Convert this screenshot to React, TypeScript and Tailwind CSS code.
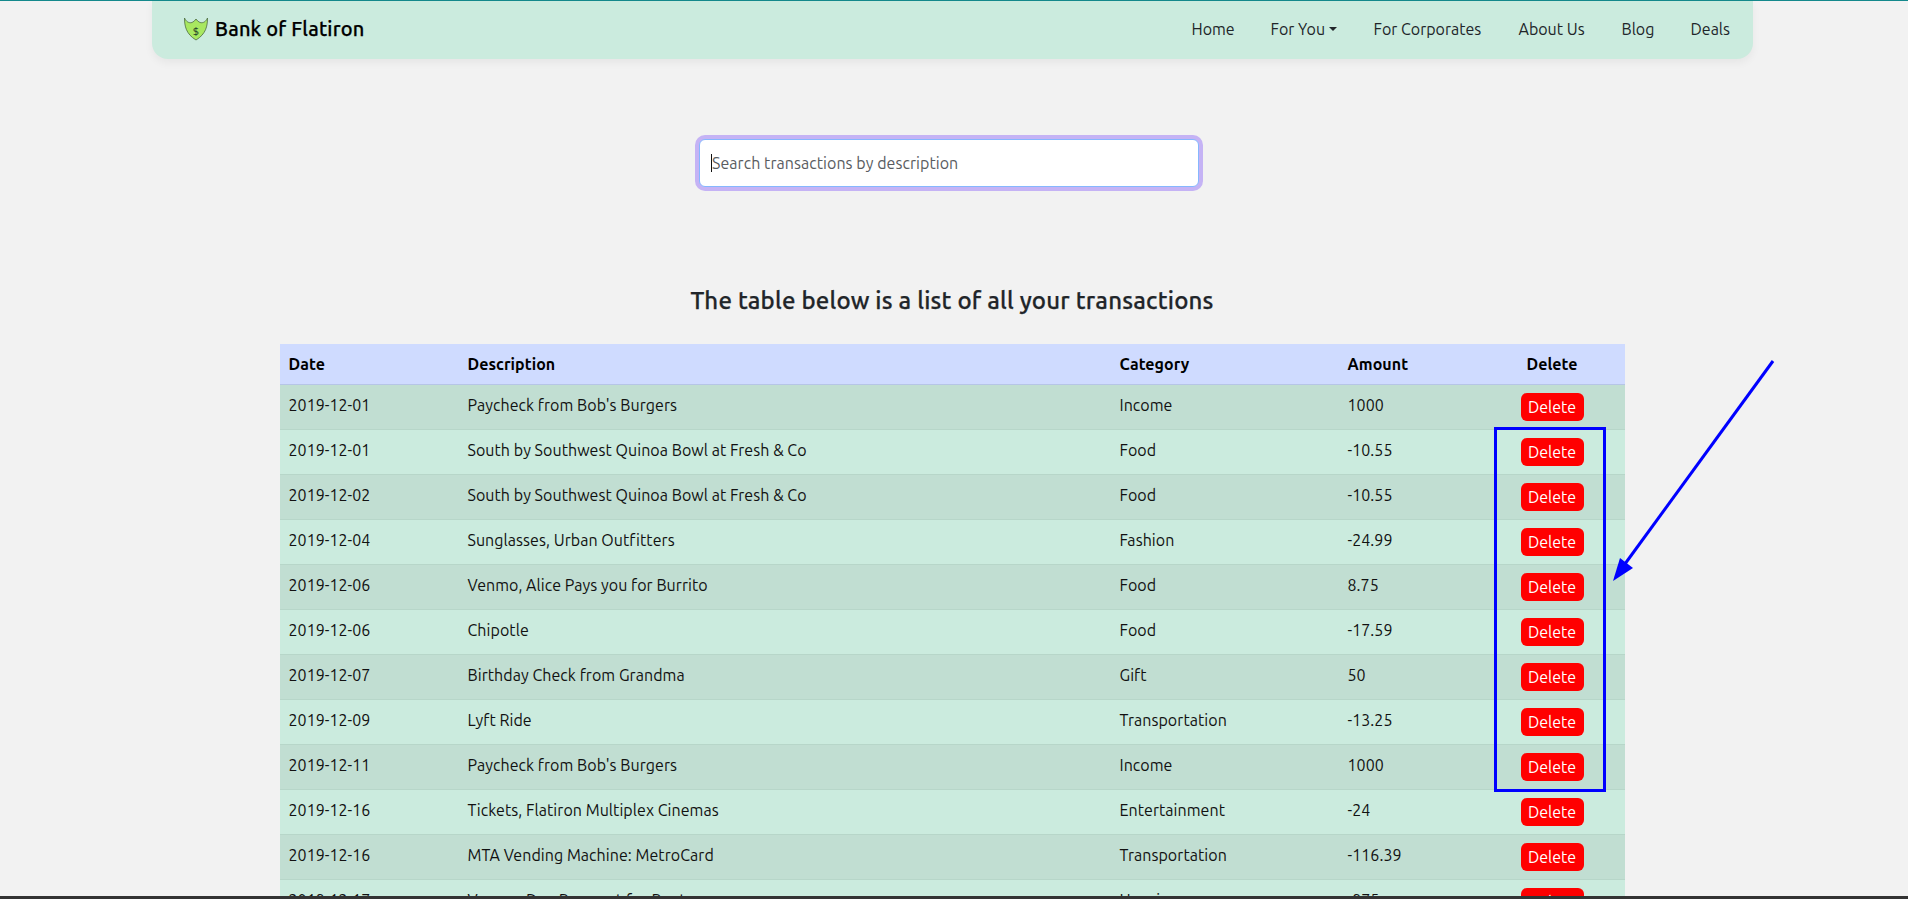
const font = "font-['Ubuntu','Noto_Sans','Open_Sans',sans-serif]";
const medium = 'font-medium [-webkit-text-stroke:0.25px] tracking-[0.2px]';

const rows = [
  { date: '2019-12-01', description: "Paycheck from Bob's Burgers", category: 'Income', amount: '1000' },
  { date: '2019-12-01', description: 'South by Southwest Quinoa Bowl at Fresh & Co', category: 'Food', amount: '-10.55' },
  { date: '2019-12-02', description: 'South by Southwest Quinoa Bowl at Fresh & Co', category: 'Food', amount: '-10.55' },
  { date: '2019-12-04', description: 'Sunglasses, Urban Outfitters', category: 'Fashion', amount: '-24.99' },
  { date: '2019-12-06', description: 'Venmo, Alice Pays you for Burrito', category: 'Food', amount: '8.75' },
  { date: '2019-12-06', description: 'Chipotle', category: 'Food', amount: '-17.59' },
  { date: '2019-12-07', description: 'Birthday Check from Grandma', category: 'Gift', amount: '50' },
  { date: '2019-12-09', description: 'Lyft Ride', category: 'Transportation', amount: '-13.25' },
  { date: '2019-12-11', description: "Paycheck from Bob's Burgers", category: 'Income', amount: '1000' },
  { date: '2019-12-16', description: 'Tickets, Flatiron Multiplex Cinemas', category: 'Entertainment', amount: '-24' },
  { date: '2019-12-16', description: 'MTA Vending Machine: MetroCard', category: 'Transportation', amount: '-116.39' },
  { date: '2019-12-17', description: 'Venmo, Dan Payment for Rent', category: 'Housing', amount: '-975' },
];

const navLinks = [
  { label: 'Home', width: 'w-[79px]' },
  { label: 'For You', width: 'w-[103px]', caret: true },
  { label: 'For Corporates', width: 'w-[145px]' },
  { label: 'About Us', width: 'w-[103px]' },
  { label: 'Blog', width: 'w-[69px]' },
  { label: 'Deals', width: 'w-[40px]' },
];

const Logo = () => (
  <svg width="26" height="24" viewBox="0 0 26 24" className="shrink-0">
    <path
      d="M1.5 1 C3 4.5 6 6.5 9 5.5 C10.8 4.8 12 3.5 13 2 C14 3.5 15.2 4.8 17 5.5 C20 6.5 23 4.5 24.5 1 C24.5 9 23 17 13 23 C3 17 1.5 9 1.5 1 Z"
      fill="#a8e860"
      stroke="#4c6b40"
      strokeWidth="0.8"
    />
    <text x="13" y="17.5" textAnchor="middle" fontSize="11" fill="#2c4a2c" fontFamily="Noto Sans, sans-serif">$</text>
  </svg>
);

const Navbar = () => (
  <nav className="ml-[152px] mr-[155px] h-[58px] flex items-center justify-between pb-[3px] pl-[31px] pr-[22.5px] bg-[#cbebde] rounded-b-[16px] shadow-[0_4px_8px_rgba(0,0,0,0.05)]">
    <a className="flex items-center gap-[6px] text-[20px] text-black">
      <Logo />
      <span className={medium}>Bank of Flatiron</span>
    </a>
    <ul className="flex items-center text-[16px] text-[#212529]">
      {navLinks.map((link) => (
        <li key={link.label} className={`${link.width} flex items-center whitespace-nowrap`}>
          {link.label}
          {link.caret && <span className="ml-[4px] w-0 h-0 border-x-[4px] border-x-transparent border-t-[4px] border-t-[#212529]" />}
        </li>
      ))}
    </ul>
  </nav>
);

const Annotation = () => (
  <>
    <div className="absolute left-[1494px] top-[427px] w-[112px] h-[365px] border-[3px] border-[#0000ff]" />
    <svg className="absolute left-0 top-0" width="1908" height="899">
      <line x1="1773" y1="361" x2="1622" y2="568" stroke="#0000ff" strokeWidth="3" />
      <polygon points="1613,581 1620,558 1633,568" fill="#0000ff" />
    </svg>
  </>
);

export default function App() {
  return (
    <div className={`${font} relative h-[899px] overflow-hidden bg-[#f2f2f2] text-[#111111] text-[16px] leading-[24px]`}>
      <div className="h-px bg-[#14898c]" />
      <Navbar />

      <div className="flex justify-center mt-[80px] ml-[-10px]">
        <div className="relative">
          <input
            placeholder="Search transactions by description"
            className="block w-[500px] h-[48px] px-[12px] bg-white rounded-[6px] border border-[#86b7fe] shadow-[0_0_0_4px_#c5b3f5] outline-none placeholder:text-[#595c5f] tracking-[0.05px]"
          />
          <span className="absolute left-[12px] top-[15px] w-px h-[18px] bg-[#111111]" />
        </div>
      </div>

      <h2 className={`${medium} mt-[99px] mb-[29px] ml-[-4px] text-center text-[24px] leading-[29px] text-[#212529]`}>
        The table below is a list of all your transactions
      </h2>

      <div className="ml-[280px] w-[1345px]">
        <table className="w-full table-fixed border-collapse tracking-[0.05px]">
          <thead>
            <tr className="bg-[#cfdbff] border-b border-[#b6c5e6] text-black">
              <th className="w-[179px] py-[8px] pl-[8.5px] text-left font-bold">Date</th>
              <th className="w-[652px] py-[8px] pl-[8.5px] text-left font-bold">Description</th>
              <th className="w-[228px] py-[8px] pl-[8.5px] text-left font-bold">Category</th>
              <th className="w-[140px] py-[8px] pl-[8.5px] text-left font-bold">Amount</th>
              <th className="p-[8px] text-center font-bold">Delete</th>
            </tr>
          </thead>
          <tbody>
            {rows.map((row, i) => (
              <tr key={i} className={`border-b border-[#b7d6c9] ${i % 2 === 0 ? 'bg-[#c1ded2]' : 'bg-[#cbebde]'}`}>
                <td className="py-[8px] pl-[8.5px] align-top">{row.date}</td>
                <td className="py-[8px] pl-[8.5px] align-top">{row.description}</td>
                <td className="py-[8px] pl-[8.5px] align-top">{row.category}</td>
                <td className="py-[8px] pl-[8.5px] align-top">{row.amount}</td>
                <td className="p-[8px] align-top text-center">
                  <button className="block mx-auto w-[63px] h-[28px] rounded-[6px] bg-[#ff0000] text-white tracking-normal">Delete</button>
                </td>
              </tr>
            ))}
          </tbody>
        </table>
      </div>

      <Annotation />
      <div className="absolute left-0 right-0 bottom-0 h-[3px] bg-[#333333]" />
    </div>
  );
}
